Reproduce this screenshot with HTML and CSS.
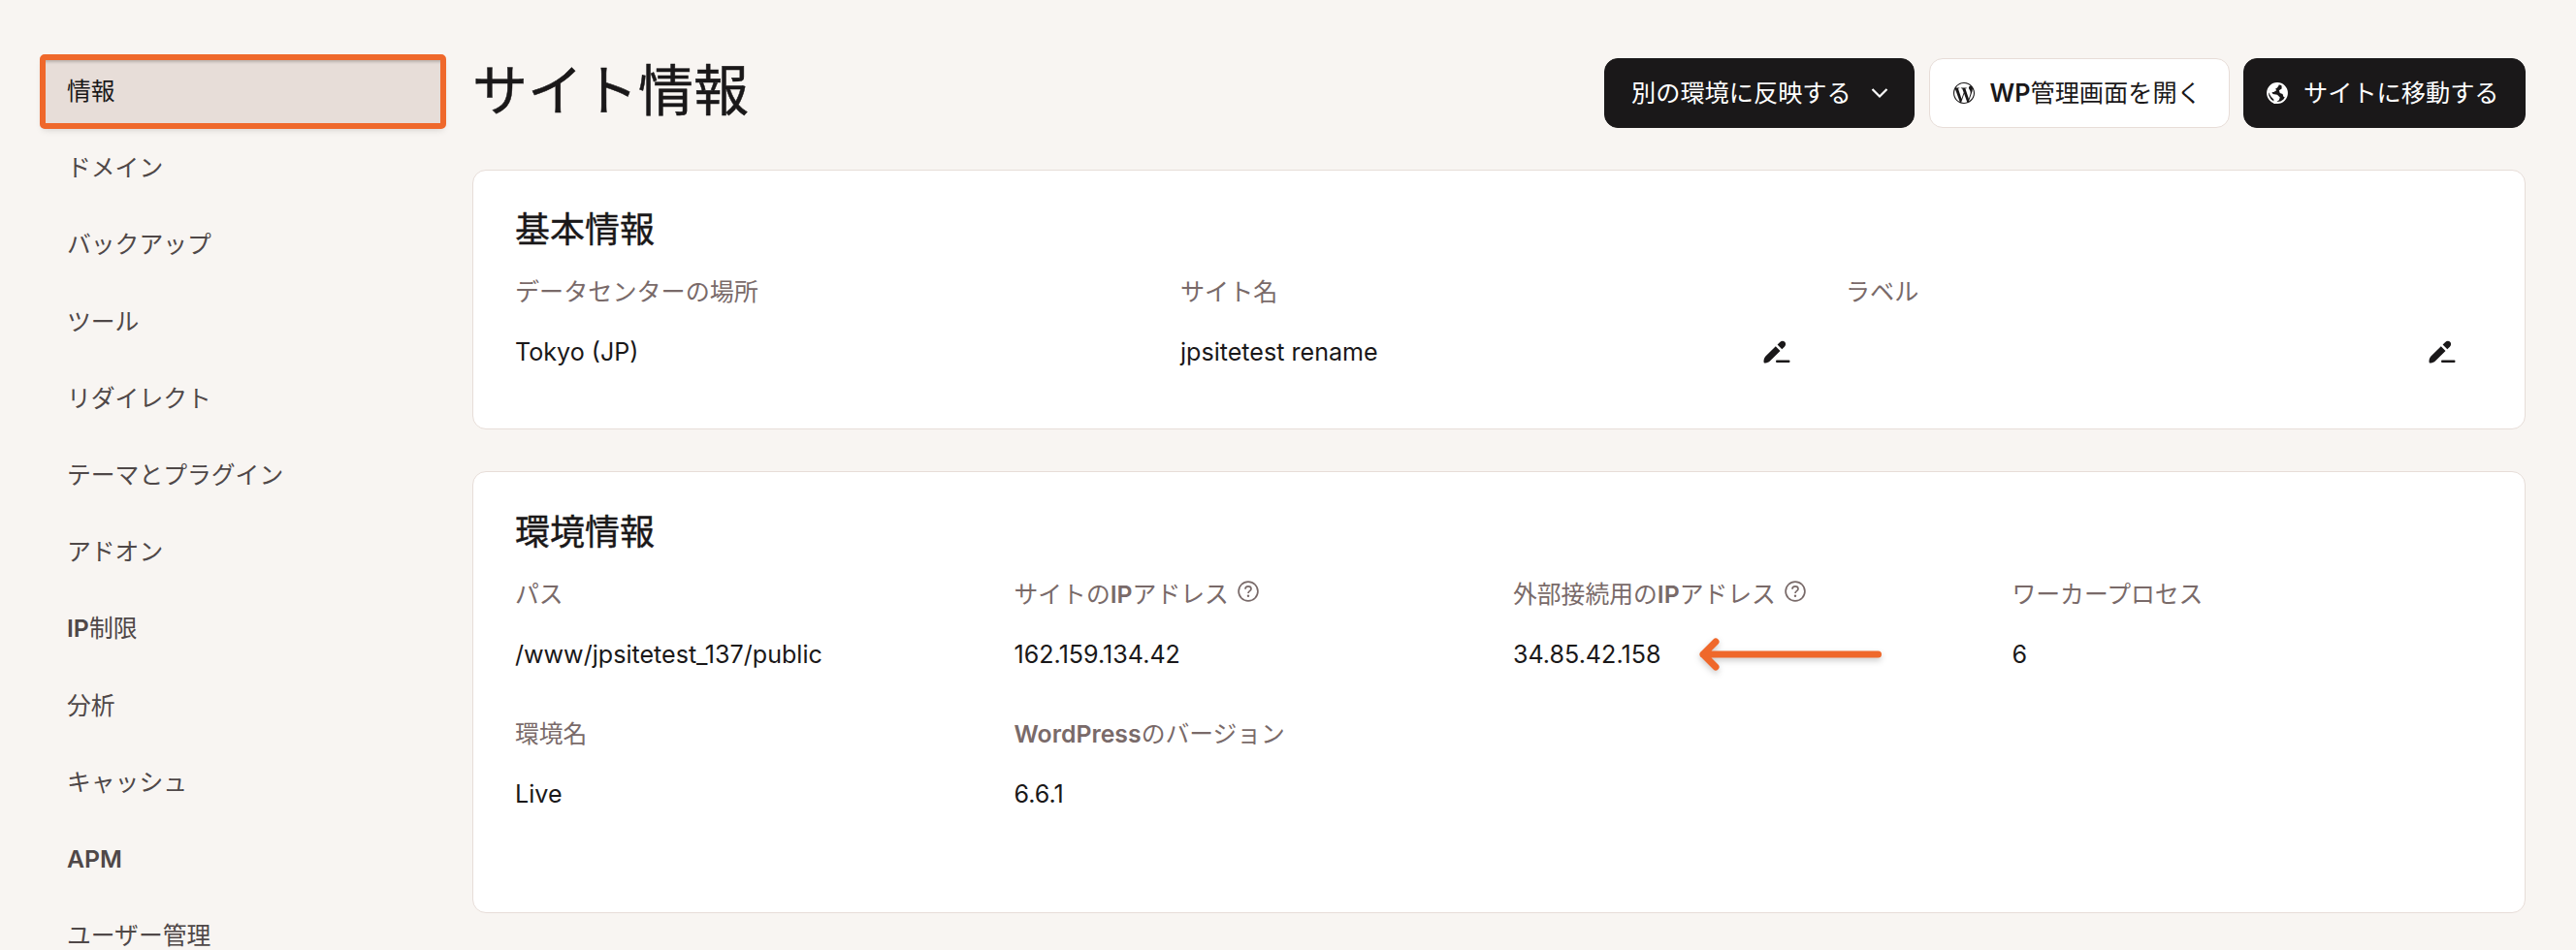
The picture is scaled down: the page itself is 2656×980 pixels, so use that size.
FILE: index.html
```html
<!DOCTYPE html>
<html lang="ja">
<head>
    <meta charset="UTF-8">
    <meta name="viewport" content="width=device-width, initial-scale=1.0">
    <title>サイト情報</title>
    <link rel="stylesheet" href="styles.css">
</head>
<body>
    <div class="layout">
        <nav class="sidebar">
            <a href="#" class="nav-item active">情報</a>
            <a href="#" class="nav-item">ドメイン</a>
            <a href="#" class="nav-item">バックアップ</a>
            <a href="#" class="nav-item">ツール</a>
            <a href="#" class="nav-item">リダイレクト</a>
            <a href="#" class="nav-item">テーマとプラグイン</a>
            <a href="#" class="nav-item">アドオン</a>
            <a href="#" class="nav-item"><b>IP</b>制限</a>
            <a href="#" class="nav-item">分析</a>
            <a href="#" class="nav-item">キャッシュ</a>
            <a href="#" class="nav-item"><b>APM</b></a>
            <a href="#" class="nav-item">ユーザー管理</a>
        </nav>

        <main class="content">
            <header class="page-header">
                <h1>サイト情報</h1>
                <div class="actions">
                    <button class="btn btn-dark btn-push">
                        <span>別の環境に反映する</span>
                        <svg class="chevron" viewBox="0 0 18 18"><path d="M1.5 5 9 12.500l7.500-7.500" fill="none" stroke="currentColor" stroke-width="2.200"/></svg>
                    </button>
                    <button class="btn btn-light btn-wp">
                        <svg class="btn-icon" viewBox="0 0 24 24"><path fill="currentColor" d="M21.469 6.825c.84 1.537 1.318 3.3 1.318 5.175 0 3.979-2.156 7.456-5.363 9.325l3.295-9.527c.615-1.54.82-2.771.82-3.864 0-.405-.026-.78-.07-1.11m-7.981.105c.647-.03 1.232-.105 1.232-.105.582-.075.514-.93-.067-.899 0 0-1.755.135-2.88.135-1.064 0-2.85-.15-2.85-.15-.585-.03-.661.855-.075.885 0 0 .54.061 1.125.09l1.68 4.605-2.37 7.08L5.354 6.9c.649-.03 1.234-.1 1.234-.1.585-.075.516-.93-.065-.896 0 0-1.746.138-2.874.138-.2 0-.438-.008-.69-.015C4.911 3.15 8.235 1.215 12 1.215c2.809 0 5.365 1.072 7.286 2.833-.046-.003-.091-.009-.141-.009-1.06 0-1.812.923-1.812 1.914 0 .89.513 1.643 1.06 2.531.411.72.89 1.643.89 2.977 0 .915-.354 1.994-.821 3.479l-1.075 3.585-3.9-11.61.001.014zM12 22.784c-1.059 0-2.081-.153-3.048-.437l3.237-9.406 3.315 9.087c.024.053.05.101.078.149-1.12.393-2.325.609-3.582.609M1.211 12c0-1.564.336-3.05.935-4.39L7.29 21.709C3.694 19.96 1.212 16.271 1.211 12M12 0C5.385 0 0 5.385 0 12s5.385 12 12 12 12-5.385 12-12S18.615 0 12 0"/></svg>
                        <span><b>WP</b>管理画面を開く</span>
                    </button>
                    <button class="btn btn-dark btn-visit">
                        <svg class="btn-icon" viewBox="0 0 24 24">
                            <circle cx="12" cy="12" r="10.900" fill="none" stroke="currentColor" stroke-width="2"/>
                            <path fill="currentColor" d="M2 11 3 6l4-4 6-1 1 2-2 3-2 1 1 2-3 2H6l1 2 5 1 3 3-1 3-3 2-1 3-2-1v-5l-3-3zM17 3l4 3 2 6-2 5-2-1-1-3-3-1-1-3 3-2z"/>
                        </svg>
                        <span>サイトに移動する</span>
                    </button>
                </div>
            </header>

            <section class="card card-basic">
                <h2>基本情報</h2>
                <div class="grid grid-3">
                    <div class="field">
                        <div class="label">データセンターの場所</div>
                        <div class="value">Tokyo (JP)</div>
                    </div>
                    <div class="field">
                        <div class="label">サイト名</div>
                        <div class="value editable">
                            <span>jpsitetest rename</span>
                            <svg class="edit" viewBox="0 0 28 24"><path fill="currentColor" d="M.7 23.200c-.6-2.200.1-5.200 1.700-6.800L12.800 6.200l4.700 4.700L7.100 21.200C5.400 22.900 3 23.900.7 23.200zM14.600 4.500l2.600-2.500c1.500-1.500 3.700-1.600 5-.3s1.200 3.500-.3 5l-2.600 2.500zM14 20.600h12.500q1 0 1 1.200t-1 1.200H14q-1 0-1-1.200t1-1.200z"/></svg>
                        </div>
                    </div>
                    <div class="field">
                        <div class="label">ラベル</div>
                        <div class="value editable">
                            <span></span>
                            <svg class="edit" viewBox="0 0 28 24"><path fill="currentColor" d="M.7 23.200c-.6-2.200.1-5.200 1.700-6.800L12.800 6.200l4.700 4.700L7.100 21.200C5.400 22.900 3 23.900.7 23.200zM14.600 4.500l2.600-2.500c1.500-1.500 3.700-1.600 5-.3s1.200 3.500-.3 5l-2.600 2.500zM14 20.600h12.500q1 0 1 1.200t-1 1.200H14q-1 0-1-1.200t1-1.200z"/></svg>
                        </div>
                    </div>
                </div>
            </section>

            <section class="card card-env">
                <h2>環境情報</h2>
                <div class="grid grid-4">
                    <div class="field">
                        <div class="label">パス</div>
                        <div class="value">/www/jpsitetest_137/public</div>
                    </div>
                    <div class="field">
                        <div class="label">
                            <span>サイトの<b>IP</b>アドレス</span>
                            <svg class="help" viewBox="0 0 22 22"><circle cx="11" cy="11" r="9.900" fill="none" stroke="currentColor" stroke-width="1.700"/><path d="M8 8.700C8 6.900 9.300 5.900 11 5.900s3 1 3 2.600c0 2.200-3 2.200-3 4.500" fill="none" stroke="currentColor" stroke-width="1.700"/><circle cx="11" cy="15.700" r="1.200" fill="currentColor"/></svg>
                        </div>
                        <div class="value">162.159.134.42</div>
                    </div>
                    <div class="field">
                        <div class="label">
                            <span>外部接続用の<b>IP</b>アドレス</span>
                            <svg class="help" viewBox="0 0 22 22"><circle cx="11" cy="11" r="9.900" fill="none" stroke="currentColor" stroke-width="1.700"/><path d="M8 8.700C8 6.900 9.300 5.900 11 5.900s3 1 3 2.600c0 2.200-3 2.200-3 4.500" fill="none" stroke="currentColor" stroke-width="1.700"/><circle cx="11" cy="15.700" r="1.200" fill="currentColor"/></svg>
                        </div>
                        <div class="value pointed">
                            <span>34.85.42.158</span>
                            <svg class="arrow" viewBox="0 0 188 34"><path d="M184.500 17H4M17 4 4 17l13 13" fill="none" stroke="currentColor" stroke-width="7" stroke-linecap="round" stroke-linejoin="round"/></svg>
                        </div>
                    </div>
                    <div class="field">
                        <div class="label">ワーカープロセス</div>
                        <div class="value">6</div>
                    </div>
                    <div class="field">
                        <div class="label">環境名</div>
                        <div class="value">Live</div>
                    </div>
                    <div class="field">
                        <div class="label"><span><b>WordPress</b>のバージョン</span></div>
                        <div class="value">6.6.1</div>
                    </div>
                </div>
            </section>
        </main>
    </div>
</body>
</html>
```
FILE: styles.css
```css
* {
    margin: 0;
    padding: 0;
    box-sizing: border-box;
}

body {
    font-family: Inter, 'Noto Sans CJK JP', sans-serif;
    font-size: 25px;
    color: #1a1819;
    background: #f8f5f2;
    height: 980px;
    overflow: hidden;
}

b {
    font-weight: 600;
}

.layout {
    display: flex;
    gap: 30px;
    padding: 59px 52px 0 44px;
}

/* Sidebar */
.sidebar {
    width: 413px;
    flex-shrink: 0;
}

.nav-item {
    display: block;
    height: 71px;
    line-height: 71px;
    margin-bottom: 8.2px;
    padding-left: 25px;
    color: #4f4848;
    font-size: 24.8px;
    text-decoration: none;
    white-space: nowrap;
}

.nav-item.active {
    color: #1a1819;
    background: #e7ddd8;
    outline: 6px solid #ef682b;
    outline-offset: -3px;
    border-radius: 2px;
    box-shadow: 0 4px 7px rgba(0, 0, 0, 0.15), inset 0 5px 3px rgba(0, 0, 0, 0.2);
}

/* Page header */
.content {
    flex: 1;
    min-width: 0;
}

.page-header {
    display: flex;
    justify-content: space-between;
    height: 116px;
}

h1 {
    font-size: 57px;
    line-height: 70px;
    font-weight: 400;
    -webkit-text-stroke: 0.5px;
}

.actions {
    display: flex;
    gap: 14.5px;
}

.btn {
    display: flex;
    align-items: center;
    height: 72px;
    margin-top: 1px;
    border: 1px solid #1a1819;
    border-radius: 14px;
    font-family: inherit;
    font-size: 25.2px;
    line-height: 40px;
    font-weight: 400;
    white-space: nowrap;
}

.btn-dark {
    background: #1a1819;
    color: white;
}

.btn-light {
    background: white;
    color: #1a1819;
    border-color: #e7ddd8;
}

.btn-push {
    width: 320px;
    padding-left: 27px;
    gap: 20px;
}

.btn-wp {
    width: 310px;
    padding-left: 24px;
    gap: 16px;
}

.btn-visit {
    width: 291px;
    padding-left: 23px;
    gap: 16px;
}

.btn-icon {
    width: 22px;
    height: 22px;
}

.chevron {
    width: 18px;
    height: 18px;
}

/* Cards */
.card {
    background: white;
    border: 1px solid #e7ddd8;
    border-radius: 14px;
    padding: 41px 43px 0;
}

.card-basic {
    height: 268px;
    margin-bottom: 43px;
    padding-top: 40px;
}

.card-env {
    height: 456px;
}

h2 {
    font-size: 36px;
    line-height: 42px;
    font-weight: 400;
    -webkit-text-stroke: 0.4px;
    margin-bottom: 23px;
}

.grid {
    display: grid;
    column-gap: 29px;
    row-gap: 42px;
}

.grid-3 {
    grid-template-columns: repeat(3, 1fr);
}

.grid-4 {
    grid-template-columns: repeat(4, 1fr);
}

.label {
    display: flex;
    align-items: center;
    gap: 9px;
    height: 40px;
    line-height: 40px;
    color: #796a69;
    font-size: 25.1px;
    white-space: nowrap;
}

.card-env .label {
    font-size: 24.8px;
}

.value {
    height: 40px;
    margin-top: 22px;
    line-height: 40px;
    font-size: 25.1px;
    font-weight: 400;
    white-space: nowrap;
}

.help {
    width: 22px;
    height: 22px;
    margin-top: -7px;
}

.editable {
    display: flex;
    align-items: center;
    justify-content: space-between;
    padding-right: 28px;
}

.edit {
    width: 28px;
    height: 24px;
}

.pointed {
    display: flex;
    align-items: center;
    gap: 40px;
}

.arrow {
    width: 188px;
    height: 34px;
    color: #ef682b;
    filter: drop-shadow(0 3px 3px rgba(0, 0, 0, 0.2));
}
```
